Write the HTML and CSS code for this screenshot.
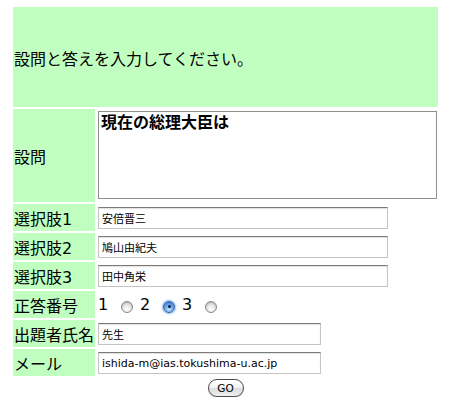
FILE: index.html
```html
<!DOCTYPE html>
<html lang="ja">
<head>
<meta charset="utf-8">
<title>設問入力</title>
<link rel="stylesheet" href="styles.css">
</head>
<body>
<form class="form">
  <div class="grid">
    <div class="head">設問と答えを入力してください。</div>

    <div class="label">設問</div>
    <div class="field field-q"><textarea class="question">現在の総理大臣は</textarea></div>

    <div class="label">選択肢1</div>
    <div class="field"><input class="text long" type="text" value="安倍晋三"></div>

    <div class="label">選択肢2</div>
    <div class="field"><input class="text long" type="text" value="鳩山由紀夫"></div>

    <div class="label">選択肢3</div>
    <div class="field"><input class="text long" type="text" value="田中角栄"></div>

    <div class="label">正答番号</div>
    <div class="field radios">
      <span class="num">1</span><input class="radio" type="radio" name="ans" value="1">
      <span class="num">2</span><input class="radio" type="radio" name="ans" value="2" checked>
      <span class="num">3</span><input class="radio" type="radio" name="ans" value="3">
    </div>

    <div class="label">出題者氏名</div>
    <div class="field"><input class="text short" type="text" value="先生"></div>

    <div class="label">メール</div>
    <div class="field"><input class="text short" type="text" value="ishida-m@ias.tokushima-u.ac.jp"></div>
  </div>
  <div class="actions"><button class="go" type="button">GO</button></div>
</form>
</body>
</html>
```

FILE: styles.css
```css
body {
  margin: 0;
  background: #fff;
  color: #000;
  font-family: "DejaVu Sans", "Noto Sans CJK JP", sans-serif;
  font-size: 16px;
}

.form {
  width: 425px;
  margin: 0 0 0 13px;
  padding-top: 7px;
}

.grid {
  display: grid;
  grid-template-columns: 82px 341px;
  column-gap: 2px;
  row-gap: 2px;
}

.head {
  grid-column: 1 / -1;
  height: 100px;
  background: #c0ffc0;
  display: flex;
  align-items: center;
  padding: 2px 1px 0;
  box-sizing: border-box;
}

.label {
  background: #c0ffc0;
  display: flex;
  align-items: center;
  padding: 0 1px;
  white-space: nowrap;
}

.field {
  display: flex;
  align-items: flex-start;
  height: 27px;
  box-sizing: border-box;
  padding: 3px 0 0 1px;
}

.field-q {
  height: 93px;
  padding-top: 2px;
}

.question {
  width: 339px;
  height: 88px;
  box-sizing: border-box;
  margin: 0;
  border: 1px solid #8f8f8f;
  padding: 1px 2px;
  font-family: "DejaVu Sans", "Noto Sans CJK JP", sans-serif;
  font-size: 16px;
  font-weight: bold;
  line-height: 1.2;
  resize: none;
  color: #000;
}

.text {
  height: 22px;
  box-sizing: border-box;
  margin: 0;
  border: 1px solid #c4c4c4;
  border-top-color: #7a7a7a;
  box-shadow: inset 0 1px 1px rgba(0, 0, 0, 0.12);
  padding: 0 3px;
  font-family: "DejaVu Sans", "Noto Sans CJK JP", sans-serif;
  font-size: 11px;
  color: #000;
  background: #fff;
}

.long { width: 290px; }
.short { width: 223px; }

.radios {
  align-items: center;
  padding-top: 0;
}

.num {
  display: inline-block;
  width: 10px;
  line-height: 1;
}

.radio {
  -webkit-appearance: none;
  appearance: none;
  width: 12px;
  height: 12px;
  margin: 4px 7px 0 13px;
  box-sizing: border-box;
  border-radius: 50%;
  border: 1px solid #8a8a8a;
  background: radial-gradient(circle at 50% 70%, #ffffff 0%, #e6e6e6 45%, #c6c6c6 100%);
  box-shadow: inset 0 1px 1px rgba(0, 0, 0, 0.15);
  position: relative;
}

.radio:checked {
  border-color: #2d5fa8;
  background: radial-gradient(circle at 50% 75%, #bfe0ff 0%, #6fa8ec 45%, #2f6fc9 100%);
  box-shadow: 0 0 2px 1px rgba(70, 130, 220, 0.55);
}

.radio:checked::after {
  content: "";
  position: absolute;
  left: 3.5px;
  top: 3.5px;
  width: 3px;
  height: 3px;
  border-radius: 50%;
  background: #0d1a2e;
}

.actions {
  display: flex;
  justify-content: center;
  padding-top: 3px;
}

.go {
  width: 36px;
  height: 18px;
  padding: 0;
  margin: 0;
  border: 1px solid #4d4d4d;
  border-radius: 9px;
  background: linear-gradient(#ffffff 0%, #f4f4f4 45%, #dcdcdc 55%, #f2f2f2 100%);
  box-shadow: 0 1px 1px rgba(0, 0, 0, 0.2);
  font-family: "DejaVu Sans", sans-serif;
  font-size: 10.5px;
  color: #000;
  line-height: 16px;
}
```
